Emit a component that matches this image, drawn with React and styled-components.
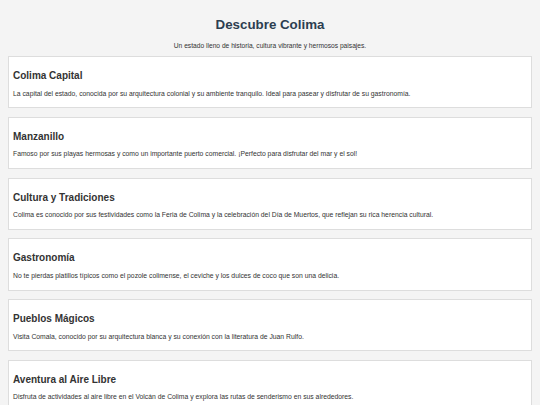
import React from "react"
import styled, { createGlobalStyle } from "styled-components"

const GlobalStyle = createGlobalStyle`
  body {
    margin: 8px;
    background: #f4f4f4;
    font-family: "Liberation Sans", Arial, sans-serif;
    color: #333;
  }
`

const Header = styled.header`
  text-align: center;
  padding-top: 9px;
  margin-bottom: 6px;
`

const Title = styled.h1`
  margin: 0;
  font-size: 13.33px;
  line-height: 15px;
  font-weight: bold;
  color: #2c3e50;
`

const Tagline = styled.p`
  margin: 10px 0 0;
  font-size: 6.67px;
  line-height: 8px;
  color: #333;
`

const Section = styled.section`
  background: #fff;
  border: 1px solid #ddd;
  padding: 0 4px;
  margin-bottom: 8.6px;
`

const SectionTitle = styled.h2`
  margin: 13px 0 8px;
  font-size: 10px;
  line-height: 11.5px;
  font-weight: bold;
  color: #333;
`

const SectionText = styled.p`
  margin: 0 0 10px;
  font-size: 6.8px;
  line-height: 7.7px;
  color: #333;
`

const places = [
  {
    title: "Colima Capital",
    text: "La capital del estado, conocida por su arquitectura colonial y su ambiente tranquilo. Ideal para pasear y disfrutar de su gastronomía.",
  },
  {
    title: "Manzanillo",
    text: "Famoso por sus playas hermosas y como un importante puerto comercial. ¡Perfecto para disfrutar del mar y el sol!",
  },
  {
    title: "Cultura y Tradiciones",
    text: "Colima es conocido por sus festividades como la Feria de Colima y la celebración del Día de Muertos, que reflejan su rica herencia cultural.",
  },
  {
    title: "Gastronomía",
    text: "No te pierdas platillos típicos como el pozole colimense, el ceviche y los dulces de coco que son una delicia.",
  },
  {
    title: "Pueblos Mágicos",
    text: "Visita Comala, conocido por su arquitectura blanca y su conexión con la literatura de Juan Rulfo.",
  },
  {
    title: "Aventura al Aire Libre",
    text: "Disfruta de actividades al aire libre en el Volcán de Colima y explora las rutas de senderismo en sus alrededores.",
  },
]

export default function App() {
  return (
    <>
      <GlobalStyle />
      <Header>
        <Title>Descubre Colima</Title>
        <Tagline>
          Un estado lleno de historia, cultura vibrante y hermosos paisajes.
        </Tagline>
      </Header>
      <main>
        {places.map(place => (
          <Section key={place.title}>
            <SectionTitle>{place.title}</SectionTitle>
            <SectionText>{place.text}</SectionText>
          </Section>
        ))}
      </main>
    </>
  )
}
